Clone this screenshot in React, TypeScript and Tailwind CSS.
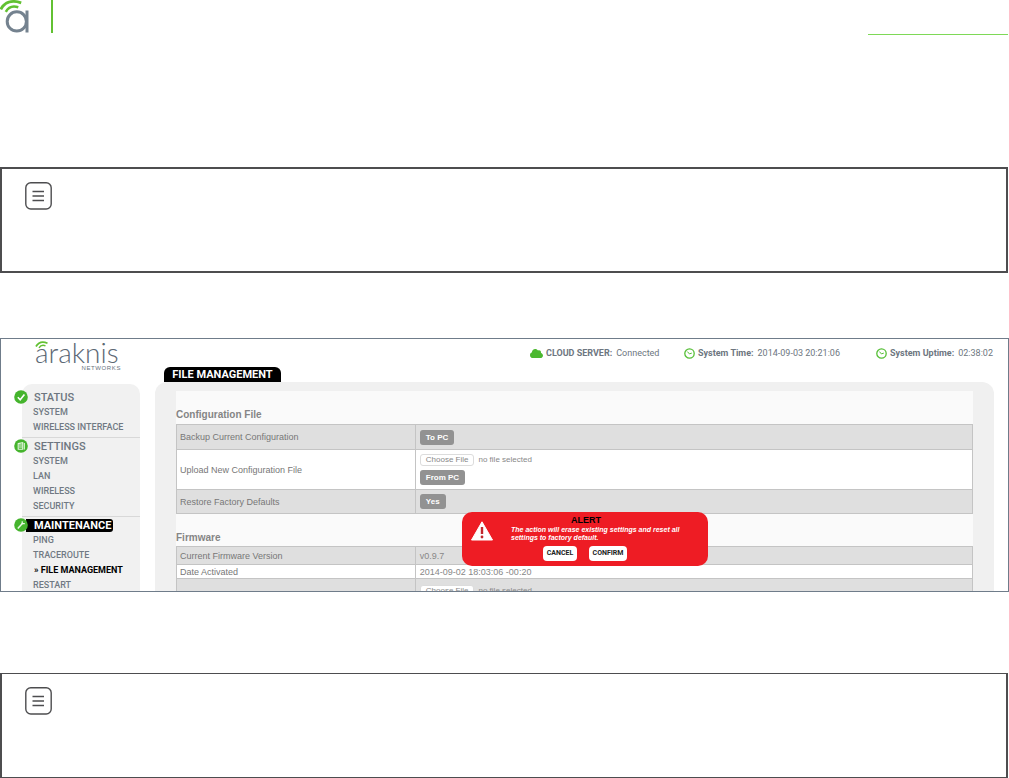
import type { ReactNode } from "react";
import { FaCloud } from "react-icons/fa";

interface NavGroup {
  title: string;
  icon: "check" | "list" | "wrench";
  items: string[];
  active?: boolean;
}

const NAV: NavGroup[] = [
  { title: "STATUS", icon: "check", items: ["SYSTEM", "WIRELESS INTERFACE"] },
  { title: "SETTINGS", icon: "list", items: ["SYSTEM", "LAN", "WIRELESS", "SECURITY"] },
  {
    title: "MAINTENANCE",
    icon: "wrench",
    items: ["PING", "TRACEROUTE", "FILE MANAGEMENT", "RESTART"],
    active: true,
  },
];

const CURRENT = "FILE MANAGEMENT";

function BrandMark() {
  return (
    <svg width="30" height="34" viewBox="0 0 30 34" fill="none" aria-label="Araknis">
      <circle cx="16.8" cy="21.4" r="9.6" stroke="#74828f" strokeWidth="3" />
      <path d="M27 10.5v22" stroke="#74828f" strokeWidth="3" />
      <path d="M0.8 9.4C4.5 2.2 12-0.4 21.2 2.8" stroke="#62c132" strokeWidth="2.9" />
      <path d="M5.8 11.8C8.5 6.8 12.6 5.4 18.3 7.2" stroke="#62c132" strokeWidth="2.6" />
    </svg>
  );
}

function NavIcon({ kind }: { kind: NavGroup["icon"] }) {
  return (
    <svg width="14" height="14" viewBox="0 0 14 14" fill="none" className="z-10 shrink-0">
      <circle cx="7" cy="7" r="6.8" fill="#45b42d" />
      {kind === "check" && <path d="M3.8 7.2l2.4 2.5 4.2-5.2" stroke="#fff" strokeWidth="1.6" />}
      {kind === "list" && (
        <g stroke="#e4f6df" strokeWidth="1.1">
          <path d="M4.2 4.6l4.5-1v6.6H4.2z" />
          <path d="M5 6h3M5 8h3M10.3 4v6.5" />
        </g>
      )}
      {kind === "wrench" && (
        <g stroke="#e9f8e5" strokeWidth="1.5">
          <path d="M3.8 10.4l5-5.4" />
          <path d="M8.2 3.2v2.4h2.6" strokeWidth="1.2" />
        </g>
      )}
    </svg>
  );
}

function ClockIcon() {
  return (
    <svg width="11" height="11" viewBox="0 0 11 11" fill="none" stroke="#55bf35" className="shrink-0">
      <circle cx="5.5" cy="5.5" r="4.7" strokeWidth="1.3" />
      <path d="M3.4 3.6l2 2.3 2.4-.8" strokeWidth="1" />
    </svg>
  );
}

function NoteBox({ className }: { className: string }) {
  return (
    <section className={`border-x-2 border-[#4d4d4f] px-[23px] py-[13px] ${className}`}>
      <svg width="27" height="28" viewBox="0 0 27 28" fill="none" stroke="#4d4d4f">
        <rect x="0.8" y="0.8" width="25.4" height="26.2" rx="5" strokeWidth="1.4" />
        <path d="M7.5 9.5h11.5M7.5 14h11.5M7.5 18.5h11.5" strokeWidth="1.6" />
      </svg>
    </section>
  );
}

function StatusItem({ icon, label, value, className }: { icon: ReactNode; label: string; value: string; className: string }) {
  return (
    <div className={`flex shrink-0 items-center whitespace-nowrap ${className}`}>
      {icon}
      <span className="ml-[3px] font-bold">{label}</span>
      <span className="ml-1">{value}</span>
    </div>
  );
}

function GrayButton({ children }: { children: ReactNode }) {
  return (
    <button className="block h-[15px] rounded-[3px] bg-[#929292] px-[6px] text-[8px] leading-[15px] font-bold text-white">
      {children}
    </button>
  );
}

function FilePicker() {
  return (
    <div className="flex items-center gap-1 text-[8px]">
      <button className="h-3 rounded-[3px] border border-[#dcdcdc] bg-white px-[5px] leading-[10px] text-[#888]">
        Choose File
      </button>
      <span>no file selected</span>
    </div>
  );
}

function Row({ label, shaded, height, children }: { label: string; shaded?: boolean; height: string; children: ReactNode }) {
  return (
    <tr className={`${shaded ? "bg-[#dfdfdf]" : "bg-white"} ${height}`}>
      <th scope="row" className="w-[30%] border border-[#c4c4c4] px-[3px] text-left font-normal text-[#777]">
        {label}
      </th>
      <td className="border border-[#c4c4c4] px-1">{children}</td>
    </tr>
  );
}

function Sidebar() {
  return (
    <aside className="w-[139px] shrink-0">
      <div className="flex h-[45px] items-start pl-[34px]">
        <div className="w-[86px]">
          <div className="relative font-[Lato,sans-serif] text-[28px] leading-[26px] font-light text-[#5c6874]">
            araknis
            <svg width="14" height="8" viewBox="0 0 14 8" fill="none" stroke="#62c132" className="absolute top-[2px] left-0">
              <path d="M1 5.5C3.5 1.2 8 .2 12.5 2.2" strokeWidth="1.8" />
              <path d="M4 6.8C5.5 4.4 8 3.8 10.5 4.8" strokeWidth="1.4" />
            </svg>
          </div>
          <div className="text-right text-[6px] leading-[7px] tracking-widest text-[#66727e]">NETWORKS</div>
        </div>
      </div>
      <nav className="ml-[21px] rounded-t-[10px] bg-[#f1f1f1] pt-[5px] font-[Roboto,sans-serif]">
        {NAV.map((group) => (
          <div key={group.title} className="border-b border-[#d8d8d8] pb-[2px] last:border-0">
            <div className="-ml-2 flex h-4 items-center">
              <NavIcon kind={group.icon} />
              <a
                href="#"
                className={
                  group.active
                    ? "-ml-[2px] rounded-r-[3px] bg-black pr-[2px] pl-2 text-[11px] leading-[13px] font-bold text-white"
                    : "ml-[6px] text-[11px] leading-[13px] font-medium text-[#6d7680]"
                }
              >
                {group.title}
              </a>
            </div>
            {group.items.map((item) => (
              <a
                key={item}
                href="#"
                className={
                  item === CURRENT
                    ? "block pl-3 text-[9px] leading-[15px] font-bold whitespace-nowrap text-black"
                    : "block pl-[11px] text-[9px] leading-[15px] font-medium whitespace-nowrap text-[#707983]"
                }
              >
                {item === CURRENT ? `» ${item}` : item}
              </a>
            ))}
          </div>
        ))}
      </nav>
    </aside>
  );
}

function AlertBox() {
  return (
    <div
      role="alertdialog"
      aria-labelledby="alert-title"
      className="absolute top-[121px] left-[286px] flex h-[54px] w-[246px] rounded-[10px] bg-[#ee1c24] pl-[9px] text-white"
    >
      <svg width="22" height="20" viewBox="0 0 22 20" className="mt-[9px] shrink-0">
        <path d="M11 .8L21.5 19H.5z" fill="#fff" stroke="#fff" strokeLinejoin="round" />
        <path d="M11 6v7" stroke="#c1272d" strokeWidth="2.4" />
        <circle cx="11" cy="16" r="1.4" fill="#c1272d" />
      </svg>
      <div className="ml-[18px] flex-1 pt-[2px]">
        <h3 id="alert-title" className="pl-[60px] text-[9px] leading-3 font-bold text-black">ALERT</h3>
        <p className="text-[7px] leading-[8px] font-bold whitespace-nowrap italic">
          The action will erase existing settings and reset all
          <br />
          settings to factory default.
        </p>
        <div className="mt-1 flex gap-3 pl-8 font-[Roboto,sans-serif] text-[7px] leading-[15px] font-bold text-[#222]">
          <button className="h-[15px] w-[34px] rounded-[4px] bg-white">CANCEL</button>
          <button className="h-[15px] w-[38px] rounded-[4px] bg-white">CONFIRM</button>
        </div>
      </div>
    </div>
  );
}

function FileManagement() {
  return (
    <div className="flex h-[254px] overflow-hidden border border-[#6f7c8a] bg-white">
      <Sidebar />
      <main className="mr-[14px] ml-[15px] flex min-w-0 flex-1 flex-col text-[9px] leading-3 text-[#888]">
        <div className="flex h-7 shrink-0 items-center justify-end font-[Roboto,sans-serif] text-[#6d7680]">
          <StatusItem className="w-[154px]" icon={<FaCloud size={13} color="#4cb830" />} label="CLOUD SERVER:" value="Connected" />
          <StatusItem className="w-[192px]" icon={<ClockIcon />} label="System Time:" value="2014-09-03 20:21:06" />
          <StatusItem className="w-[118px]" icon={<ClockIcon />} label="System Uptime:" value="02:38:02" />
        </div>
        <h1 className="ml-[9px] h-[15px] w-[117px] shrink-0 rounded-t-[6px] bg-black text-center font-[Roboto,sans-serif] text-[11px] leading-[16px] font-bold whitespace-nowrap text-white">
          FILE MANAGEMENT
        </h1>
        <div className="flex-1 rounded-t-[12px] bg-[#f0f0f0] px-[21px] pt-[9px]">
          <div className="relative h-full bg-[#fafafa] pt-[17px]">
            <h2 className="h-4 text-[10px] leading-[14px] font-bold text-[#858585]">Configuration File</h2>
            <table className="w-full border-collapse">
              <tbody>
                <Row label="Backup Current Configuration" shaded height="h-[25px]">
                  <GrayButton>To PC</GrayButton>
                </Row>
                <Row label="Upload New Configuration File" height="h-[40px]">
                  <div className="flex flex-col gap-1">
                    <FilePicker />
                    <div className="flex">
                      <GrayButton>From PC</GrayButton>
                    </div>
                  </div>
                </Row>
                <Row label="Restore Factory Defaults" shaded height="h-[24px]">
                  <GrayButton>Yes</GrayButton>
                </Row>
              </tbody>
            </table>
            <h2 className="mt-4 h-4 text-[10px] leading-4 font-bold text-[#858585]">Firmware</h2>
            <table className="w-full border-collapse">
              <tbody>
                <Row label="Current Firmware Version" shaded height="h-[18px]">v0.9.7</Row>
                <Row label="Date Activated" height="h-[14px]">2014-09-02 18:03:06 -00:20</Row>
                <Row label="" shaded height="h-[25px]">
                  <FilePicker />
                </Row>
              </tbody>
            </table>
            <AlertBox />
          </div>
        </div>
      </main>
    </div>
  );
}

export default function App() {
  return (
    <div className="bg-white font-['Liberation_Sans',Arial,sans-serif]">
      <header className="flex h-[35px] items-start pr-px">
        <BrandMark />
        <div className="ml-[21px] h-[33px] w-[2px] bg-[#62c132]" />
        <div className="ml-auto w-[140px] self-end border-b border-[#7ed957]" />
      </header>
      <NoteBox className="mt-[132px] mr-px h-[106px] border-y-2" />
      <div className="pt-[65px] pb-[81px]">
        <FileManagement />
      </div>
      <NoteBox className="mr-px h-[105px] border-y" />
    </div>
  );
}
